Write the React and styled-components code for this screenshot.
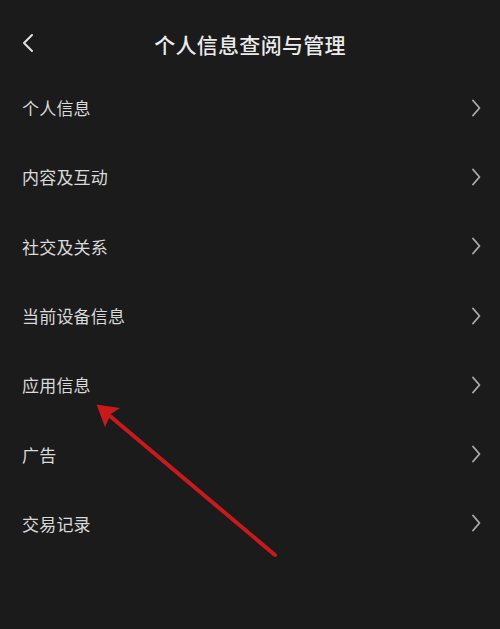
import React from 'react';
import styled, { createGlobalStyle } from 'styled-components';

const GlobalStyle = createGlobalStyle`
  html, body {
    margin: 0;
    padding: 0;
    background: #1b1b1b;
  }
  * { box-sizing: border-box; }
`;

const Page = styled.div`
  position: relative;
  width: 500px;
  height: 629px;
  overflow: hidden;
  background: #1b1b1b;
  font-family: "Noto Sans CJK SC", "Noto Sans", sans-serif;
`;

const Header = styled.div`
  position: relative;
  height: 73px;
  display: flex;
  justify-content: center;
  padding-top: 29px;
`;

const BackButton = styled.button`
  position: absolute;
  left: 20px;
  top: 32px;
  width: 16px;
  height: 22px;
  padding: 0;
  border: none;
  background: transparent;
  display: flex;
  align-items: center;
  justify-content: center;
`;

const Title = styled.h1`
  margin: 0;
  font-size: 21px;
  line-height: 30px;
  font-weight: 500;
  color: #ebebeb;
  letter-spacing: 0.3px;
`;

const List = styled.ul`
  list-style: none;
  margin: 0;
  padding: 0;
`;

const Row = styled.li`
  height: 69.3px;
  display: flex;
  align-items: center;
  justify-content: space-between;
  padding: 0 18px 0 22px;
`;

const Label = styled.span`
  font-size: 17px;
  color: #d9d9d9;
  letter-spacing: 0.2px;
`;

const NextIcon = () => (
  <svg width="12" height="18" viewBox="0 0 12 18" fill="none">
    <path d="M3 1.5 L9.5 9 L3 16.5" stroke="#a8a8a8" strokeWidth="1.9" strokeLinecap="round" strokeLinejoin="round" />
  </svg>
);

const BackIcon = () => (
  <svg width="14" height="20" viewBox="0 0 14 20" fill="none">
    <path d="M11 2 L3 10 L11 18" stroke="#e0e0e0" strokeWidth="2" strokeLinecap="round" strokeLinejoin="round" />
  </svg>
);

const ArrowOverlay = styled.svg`
  position: absolute;
  left: 0;
  top: 0;
  pointer-events: none;
`;

const items = ['个人信息', '内容及互动', '社交及关系', '当前设备信息', '应用信息', '广告', '交易记录'];

export default function App() {
  return (
    <Page>
      <GlobalStyle />
      <Header>
        <BackButton aria-label="返回">
          <BackIcon />
        </BackButton>
        <Title>个人信息查阅与管理</Title>
      </Header>
      <List>
        {items.map((t) => (
          <Row key={t}>
            <Label>{t}</Label>
            <NextIcon />
          </Row>
        ))}
      </List>
      <ArrowOverlay width="500" height="629" viewBox="0 0 500 629">
        <line x1="275" y1="555" x2="104" y2="411" stroke="#c8191c" strokeWidth="4" strokeLinecap="round" />
        <path d="M96.5 404.5 L120 408 L111 414 L105 427 Z" fill="#c8191c" />
      </ArrowOverlay>
    </Page>
  );
}
